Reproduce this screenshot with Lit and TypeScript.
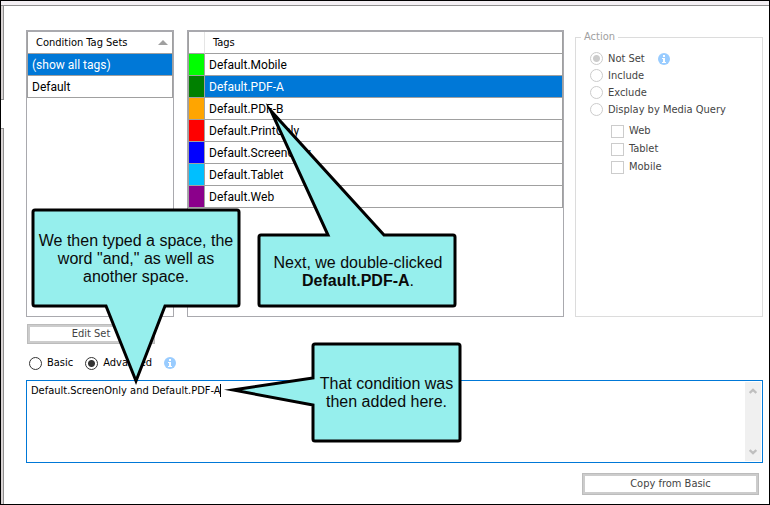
import { LitElement, html, css, svg } from "lit";
import { customElement, property, state } from "lit/decorators.js";
import { classMap } from "lit/directives/class-map.js";
import { styleMap } from "lit/directives/style-map.js";

const TAGS = [
  { name: "Default.Mobile", color: "#00ff00" },
  { name: "Default.PDF-A", color: "#008000" },
  { name: "Default.PDF-B", color: "#ffa500" },
  { name: "Default.PrintOnly", color: "#ff0000" },
  { name: "Default.ScreenOnly", color: "#0000ff" },
  { name: "Default.Tablet", color: "#00bfff" },
  { name: "Default.Web", color: "#8b008b" },
];

@customElement("info-icon")
export class InfoIcon extends LitElement {
  static styles = css`
    :host { display: block; width: 12px; height: 12px; }
    svg { display: block; }
  `;
  render() {
    return html`<svg width="12" height="12" viewBox="0 0 12 12" role="img" aria-label="Info">
      <circle cx="6" cy="6" r="6" fill="#99ccff" />
      <path d="M5 2h2v2H5z M4 5h3v4h1v1H4V9h1V6H4z" fill="#fff" />
    </svg>`;
  }
}

@customElement("call-out")
export class CallOut extends LitElement {
  @property() shape = "";
  static styles = css`
    :host { position: absolute; display: grid; place-items: center; text-align: center;
      font: 16px/18px "Liberation Sans", Arial, sans-serif; color: #0a0a0a; pointer-events: none; }
    svg { position: absolute; left: 0; top: 0; overflow: visible; }
    .text { position: relative; white-space: nowrap; padding-top: 2px; }
  `;
  render() {
    return html`<svg width="1" height="1" aria-hidden="true">
        ${svg`<path d=${this.shape} fill="#96efed" stroke="#000" stroke-width="3" stroke-miterlimit="12" />`}
      </svg>
      <div class="text"><slot></slot></div>`;
  }
}

@customElement("app-root")
export class AppRoot extends LitElement {
  @state() private selected = "Default.PDF-A";
  @state() private expression = "Default.ScreenOnly and Default.PDF-A";

  static styles = css`
    :host { display: block; }
    * { box-sizing: border-box; }
    .window { position: relative; display: flex; flex-direction: column; min-height: 100vh; border: 1px solid #000;
      background: #fff; font: 11px/14px "DejaVu Sans Condensed", "DejaVu Sans", sans-serif; font-stretch: condensed; color: #000; }
    .strip { height: 5px; background: #f3eff3; border-bottom: 1px solid #909090; }
    .body { flex: 1; display: flex; }
    .rail { width: 3px; display: flex; flex-direction: column; gap: 28px; }
    .rail i { background: #d9d4d4; border: 1px solid #909090; border-width: 0 1px 1px 0; height: 94px; }
    .rail i + i { flex: 1; border-width: 1px 1px 0 0; }
    .dialog { flex: 1; min-width: 0; padding: 24px 6px 9px 22px; }
    .panes { display: grid; grid-template-columns: 148px minmax(0, 1fr) 188px; column-gap: 11px; }
    .list { height: 287px; border: 1px solid #a9a9ae; border-top-width: 2px; background: #fff; }
    .tags { margin-left: 2px; }
    table { width: 100%; border: 1px solid #a0a0a0; border-width: 0 1px; border-spacing: 0; table-layout: fixed; }
    th, td { height: 22px; padding: 0 0 0 4px; border-bottom: 1px solid #a0a0a0; text-align: left; font-weight: 400; white-space: nowrap; }
    th { height: 22px; padding-left: 8px; }
    .names { font: 12px/16px Roboto, "Noto Sans", sans-serif; }
    .swatch { width: 16px; padding: 0; border-right: 1px solid #a0a0a0; }
    th.swatch { border-right-color: #e5e5e5; }
    .on td.name { background: #0078d7; color: #fff; }
    .heading { display: flex; justify-content: space-between; align-items: center; padding-right: 4px; }
    .sort { border: 5px solid transparent; border-top: 0; border-bottom: 5px solid #a0a0a0; }
    fieldset { min-width: 0; margin: 0; padding: 6px 0 0 14px; border: 1px solid #dcdcdc; color: #444; height: 287px; }
    legend { padding: 0 3px; margin-left: -9px; color: #a0a0a0; }
    label { display: flex; align-items: center; gap: 5px; }
    input { appearance: none; margin: 0; width: 13px; height: 13px; border: 1px solid #ccc; background: #fff; flex: none; }
    input[type="radio"] { border-radius: 50%; }
    .action label { height: 17px; }
    .action .row { display: flex; gap: 13px; align-items: center; }
    .media { padding: 4px 0 0 21px; }
    .media label { height: 18px; }
    input[type="radio"]:checked { background: radial-gradient(circle, #ccc 3px, #fff 4px); }
    .mode input { border-color: #333; }
    .mode input[type="radio"]:checked { background: radial-gradient(circle, #333 3px, #fff 4px); }
    .btn { height: 22px; padding: 0; font: inherit; color: #444; background: #fff; border: 1px solid #bcbcbc; box-shadow: inset 0 0 0 2px #ccc; }
    .edit { display: block; width: 128px; height: 20px; margin: 7px 0 0 1px; }
    .mode { display: flex; align-items: center; gap: 12px; margin: 12px 0 10px 3px; height: 14px; }
    .field { position: relative; display: flex; height: 83px; border: 1px solid #0078d7; padding: 1px; }
    textarea { flex: 1; border: 0; outline: 0; resize: none; padding: 2px 3px; margin: 0; font: inherit; color: #000; background: none; overflow: hidden; }
    .caret { position: absolute; left: 193px; top: 3px; width: 1px; height: 13px; background: #000; }
    .bar { width: 16px; display: flex; flex-direction: column; justify-content: space-between; background: #f0f0f0; }
    .bar button { height: 18px; padding: 0; border: 0; background: none; display: grid; place-items: center; }
    .copy { display: block; width: 177px; margin: 10px 4px 0 auto; }
    .one { left: 31px; top: 208px; width: 208px; height: 98px; }
    .two { left: 257px; top: 233px; width: 200px; height: 73px; }
    .three { left: 311px; top: 342px; width: 149px; height: 98px; }
  `;

  private chevron(d: string) {
    return html`<svg width="8" height="6" viewBox="0 0 8 6"><path d=${d} fill="none" stroke="#bfbfbf" stroke-width="2.4" /></svg>`;
  }

  render() {
    return html`
      <div class="window">
        <div class="strip"></div>
        <div class="body">
          <div class="rail"><i></i><i></i></div>
          <main class="dialog">
            <div class="panes">
              <div class="list">
                <table>
                  <thead><tr><th><div class="heading">Condition Tag Sets<span class="sort"></span></div></th></tr></thead>
                  <tbody class="names">
                    <tr class="on"><td class="name">(show all tags)</td></tr>
                    <tr><td class="name">Default</td></tr>
                  </tbody>
                </table>
              </div>
              <div class="list tags">
                <table>
                  <thead><tr><th class="swatch"></th><th>Tags</th></tr></thead>
                  <tbody class="names">
                    ${TAGS.map((t) => html`
                      <tr class=${classMap({ on: t.name === this.selected })} @click=${() => (this.selected = t.name)}>
                        <td class="swatch" style=${styleMap({ background: t.color })}></td>
                        <td class="name">${t.name}</td>
                      </tr>`)}
                  </tbody>
                </table>
              </div>
              <fieldset class="action">
                <legend>Action</legend>
                <div class="row"><label><input type="radio" name="action" checked disabled />Not Set</label><info-icon></info-icon></div>
                <label><input type="radio" name="action" disabled />Include</label>
                <label><input type="radio" name="action" disabled />Exclude</label>
                <label><input type="radio" name="action" disabled />Display by Media Query</label>
                <div class="media">
                  ${["Web", "Tablet", "Mobile"].map((m) => html`<label><input type="checkbox" disabled />${m}</label>`)}
                </div>
              </fieldset>
            </div>
            <button class="btn edit" disabled>Edit Set</button>
            <div class="mode">
              <label><input type="radio" name="mode" />Basic</label>
              <label><input type="radio" name="mode" checked />Advanced</label>
              <info-icon></info-icon>
            </div>
            <div class="field">
              <textarea aria-label="Condition expression" spellcheck="false" .value=${this.expression}></textarea>
              <span class="caret"></span>
              <div class="bar">
                <button aria-label="Scroll up">${this.chevron("M0.6 5L4 1.8L7.4 5")}</button>
                <button aria-label="Scroll down">${this.chevron("M0.6 1L4 4.2L7.4 1")}</button>
              </div>
            </div>
            <button class="btn copy" disabled>Copy from Basic</button>
          </main>
        </div>
        <call-out class="one" shape="M3 1H205Q207 1 207 3V95Q207 97 205 97H133L104 172L74 97H3Q1 97 1 95V3Q1 1 3 1Z">We then typed a space, the<br />word "and," as well as<br />another space.</call-out>
        <call-out class="two" shape="M3 1H70L13 -123L126 1H195Q197 1 197 3V70Q197 72 195 72H3Q1 72 1 70V3Q1 1 3 1Z">Next, we double-clicked<br /><b>Default.PDF-A</b>.</call-out>
        <call-out class="three" shape="M3 1H146Q148 1 148 3V96Q148 98 146 98H3Q1 98 1 96V62L-79 47L1 35V3Q1 1 3 1Z">That condition was<br />then added here.</call-out>
      </div>
    `;
  }
}
